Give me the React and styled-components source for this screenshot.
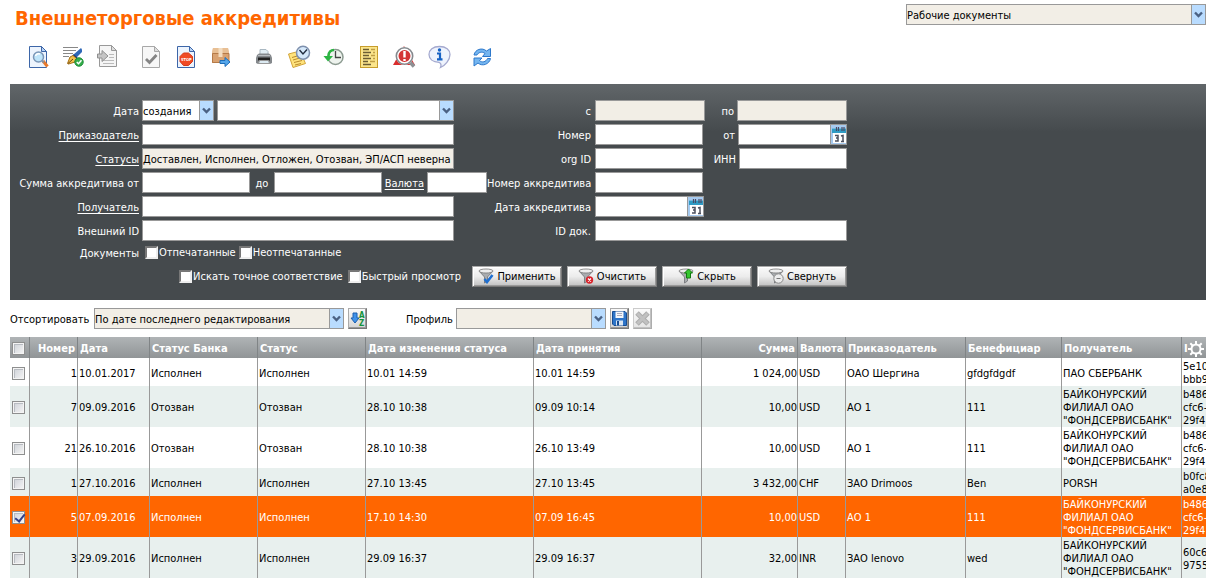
import React, { useState } from 'react';
import styled, { createGlobalStyle, css } from 'styled-components';

const GlobalStyle = createGlobalStyle`
  * { box-sizing: border-box; }

  body {
    margin: 0;
    background: #fff;
    color: #000;
    overflow: hidden;
  }

  body, input, select, button {
    font-family: 'DejaVu Sans Condensed', 'Noto Sans', sans-serif;
    font-size: 11px;
    line-height: 13px;
  }
`;

const Page = styled.div`
  padding-left: 10px;
`;

const Header = styled.header`
  display: flex;
  justify-content: space-between;
  align-items: flex-start;
  height: 40px;
  padding: 4px 0 0 5px;
`;

const Title = styled.h1`
  margin: 0;
  color: #f60;
  font-size: 20px;
  line-height: 28px;
  font-weight: bold;
`;

const Toolbar = styled.div`
  display: flex;
  gap: 8px;
  height: 44px;
  padding: 5px 0 0 10px;
`;

const ToolGroup = styled.div`
  display: flex;
`;

const ToolButton = styled.button`
  width: 35px;
  height: 24px;
  padding: 0;
  border: 0;
  background: none;
  cursor: pointer;

  svg { display: block; margin: 0 auto; }
`;

const FilterPanel = styled.form`
  display: flex;
  flex-direction: column;
  gap: 3px;
  height: 216px;
  padding-top: 16px;
  background: linear-gradient(#616669, #454a4d 48px);
  color: #fff;
`;

const FilterRow = styled.div`
  display: flex;
  align-items: center;
  width: 837px;
  height: 21px;
`;

const FieldLabel = styled.label`
  flex: ${props => props.$grow ? '1' : 'none'};
  width: ${props => props.$grow ? 'auto' : '132px'};
  padding-top: 2px;
  padding-right: ${props => props.$grow ? '4px' : '3px'};
  text-align: right;
  text-decoration: ${props => props.$link ? 'underline' : 'none'};
  text-underline-offset: 2px;
  white-space: nowrap;
`;

const FieldGroup = styled.div`
  display: flex;
  flex: none;
  align-items: center;
  gap: ${props => props.$gap || 0}px;
  width: ${props => props.$width}px;
`;

const InnerLabel = styled.label`
  flex: 1;
  padding: 2px 3px 0;
  text-align: ${props => props.$align || 'center'};
  text-decoration: ${props => props.$link ? 'underline' : 'none'};
  text-underline-offset: 2px;
`;

const field = css`
  height: 21px;
  border: 1px solid #999;
  border-radius: 0;
  background: ${props => props.$muted ? '#f2eee6' : '#fff'};
  color: #000;
  outline: none;
`;

const TextInput = styled.input`
  ${field}
  width: ${props => props.$width ? `${props.$width}px` : '100%'};
  padding: 2px 0 0;
`;

const SelectWrap = styled.span`
  position: relative;
  display: block;
  flex: none;
  width: ${props => props.$width}px;

  svg {
    position: absolute;
    top: 1px;
    right: 1px;
    pointer-events: none;
  }
`;

const NativeSelect = styled.select`
  ${field}
  display: block;
  appearance: none;
  width: 100%;
  padding: 2px 15px 0 0;
`;

const DateWrap = styled.span`
  display: flex;
  flex: none;
  width: 109px;
`;

const CalendarButton = styled.button`
  flex: none;
  width: 17px;
  height: 21px;
  margin-left: -1px;
  padding: 0;
  border: 1px solid #999;
  background: #a6caf0;

  svg { display: block; }
`;

const CheckLabel = styled.label`
  display: flex;
  align-items: center;
  gap: 1px;
  white-space: nowrap;
`;

const PanelCheck = styled.input`
  appearance: none;
  width: 13px;
  height: 13px;
  margin: 0;
  border: 2px solid;
  border-color: #777 #eee #eee #777;
  background: #fff;

  &:checked { background: #31527f; }
`;

const CheckRow = styled(FilterRow)`
  height: ${props => props.$height}px;
  justify-content: ${props => props.$end ? 'flex-end' : 'flex-start'};
  gap: ${props => props.$gap || 0}px;
`;

const Actions = styled.div`
  display: flex;
  gap: 5px;
  padding-left: 6px;
`;

const ActionButton = styled.button`
  display: flex;
  align-items: center;
  justify-content: center;
  gap: 3px;
  width: 90px;
  height: 21px;
  padding: 0;
  border: 1px solid;
  border-color: #aaa #777 #777 #aaa;
  box-shadow: inset 1px 1px #fff, inset -1px -1px #999;
  background: linear-gradient(#fafafa, #ececec 50%, #c0c0c0);
  color: #000;
  white-space: nowrap;
`;

const SortBar = styled.div`
  display: flex;
  align-items: center;
  height: 37px;
`;

const SortLabel = styled.label`
  width: ${props => props.$width}px;
  padding-top: 2px;
  padding-left: ${props => props.$indent || 0}px;
`;

const SmallButton = styled.button`
  width: 19px;
  height: 21px;
  margin-left: 4px;
  padding: 0;
  border: 1px solid;
  border-color: #aaa #777 #777 #aaa;
  box-shadow: inset -1px -1px #999;
  background: linear-gradient(#fafafa, #d4d4d4);

  &:disabled { opacity: 0.6; }
  svg { display: block; }
`;

const Table = styled.table`
  width: 100%;
  table-layout: fixed;
  border-collapse: separate;
  border-spacing: 0;
`;

const HeadCell = styled.th`
  height: 21px;
  padding: 2px 2px 0;
  overflow: hidden;
  border-right: 1px solid #808486;
  background: linear-gradient(#b0b4b6, #909496);
  color: #fff;
  font-weight: bold;
  text-align: ${props => props.$right ? 'right' : 'left'};
  white-space: nowrap;

  &:last-child { border-right: 0; }
`;

const Row = styled.tr`
  background: ${props => props.$selected ? '#f60' : props.$even ? '#e8f0ee' : '#fff'};
  color: ${props => props.$selected ? '#fff' : '#000'};
`;

const Cell = styled.td`
  padding: 2px 0 0 ${props => props.$right ? 0 : 1}px;
  overflow: hidden;
  border-right: 1px solid #999;
  text-align: ${props => props.$right ? 'right' : 'left'};
  white-space: ${props => props.$lines ? 'pre' : 'nowrap'};

  &:last-child { border-right: 0; }
`;

const RowCheck = styled.input`
  appearance: none;
  display: block;
  width: 13px;
  height: 13px;
  margin: 0 0 0 1px;
  border: 1px solid #8e8f8f;
  box-shadow: inset 0 0 0 1px #f4f4f4, inset 2px 2px #b8bcc2;
  background: linear-gradient(135deg, #cbcfd5, #f6f6f6);

  &:checked::after {
    content: '';
    display: block;
    width: 4px;
    height: 8px;
    margin: 0 0 0 4px;
    border: solid #31408c;
    border-width: 0 2px 2px 0;
    transform: rotate(38deg);
  }
`;

const HeadCheck = styled(RowCheck)`
  margin-left: 0;
`;

const GearHead = styled.span`
  display: flex;
  align-items: center;

  svg { flex: none; }
`;

const Arrow = () => (
  <svg width="14" height="19" viewBox="0 0 14 19">
    <rect width="14" height="19" fill="#b9dcff" />
    <path d="M0 0V19" stroke="#999" strokeWidth="2" />
    <path d="M4 7.500L7.500 11L11 7.500" fill="none" stroke="#4a6184" strokeWidth="2.400" />
  </svg>
);

const Select = ({ id, label, width, options, muted }) => (
  <SelectWrap $width={width}>
    <NativeSelect id={id} aria-label={label} $muted={muted}>
      {options.map(o => <option key={o}>{o}</option>)}
    </NativeSelect>
    <Arrow />
  </SelectWrap>
);

const Calendar = () => (
  <svg width="15" height="19" viewBox="0 0 15 19">
    <rect width="15" height="19" fill="#a6caf0" />
    <rect x="2" y="8" width="13" height="10" fill="#fff" />
    <rect x="1" y="3" width="14" height="5" fill="#2f9bc4" />
    <path d="M1 3.500H15" stroke="#77b9dc" />
    <path d="M5.500 2V6M7.500 2V6M11 2V6M13 2V6" stroke="#4a4a66" strokeWidth="1.200" />
    <path d="M4 10.500H7V16H4M5 13H7M10 11L12 10.500V16M10 16.500H13" fill="none" stroke="#4b4f5e" strokeWidth="1.500" />
  </svg>
);

const DateField = ({ id }) => (
  <DateWrap>
    <TextInput id={id} />
    <CalendarButton type="button" aria-label="Календарь"><Calendar /></CalendarButton>
  </DateWrap>
);

const Icon = ({ size = 24, children }) => (
  <svg width={size} height={size} viewBox={`0 0 ${size} ${size}`} fill="none">{children}</svg>
);

const Sheet = ({ stroke, fill, fold, y = 0 }) => (
  <>
    <path d={`M3.500 ${1.5 + y}H15.500L20.500 ${6.5 + y}V${22.5 + y}H3.500Z`} fill={fill} stroke={stroke} />
    <path d={`M15.500 ${1.5 + y}V${6.5 + y}H20.500Z`} fill={fold} stroke={stroke} />
  </>
);

const ViewIcon = () => (
  <Icon>
    <Sheet stroke="#3d66a8" fill="#edf4fd" fold="#b9d4f5" />
    <path d="M17 16L21.500 21.500" stroke="#e8792a" strokeWidth="3" />
    <path d="M16 15.500L18 17.500" stroke="#8a8f98" strokeWidth="2" />
    <circle cx="12.500" cy="12" r="5" fill="#bfe5fa" stroke="#7b97b8" strokeWidth="1.500" />
    <path d="M9.500 11C10 9 12 8.500 14 9" stroke="#fff" strokeWidth="1.500" />
  </Icon>
);

const SignIcon = () => (
  <Icon>
    <path d="M2 2.500H17M2 5.500H15M2 8.500H12M2 11.500H8" stroke="#888" />
    <path d="M12 10L20 3L21 4.500L21 7L16 12Z" fill="#2f68b8" />
    <path d="M12 10L16 13" stroke="#1b3f7c" strokeWidth="2" />
    <path d="M6.500 18.500L9 12L12 10.500L15.500 13.500L14 17L7.500 19Z" fill="#f2c14c" stroke="#a36d15" />
    <path d="M7 18.500L12 14" stroke="#694410" />
    <circle cx="18" cy="17" r="4.200" fill="#35ae4b" stroke="#168932" />
    <path d="M15.800 17L17.500 18.700L20.500 15.300" stroke="#fff" strokeWidth="1.500" />
  </Icon>
);

const ImportIcon = () => (
  <Icon>
    <Sheet stroke="#999" fill="#f5f5f5" fold="#ddd" y={-1} />
    <path d="M13 9.500H18M13 12.500H18M7 15.500H18M7 18.500H18" stroke="#bbb" />
    <path d="M1.500 9H6V5.500L12 11L6 16.500V13H1.500Z" fill="#c4c4c4" stroke="#909090" />
  </Icon>
);

const CheckIcon = () => (
  <Icon>
    <Sheet stroke="#a8a8a8" fill="#f7f7f7" fold="#ddd" />
    <path d="M7 14L10.500 17.500L17.500 10" stroke="#858585" strokeWidth="2.800" />
  </Icon>
);

const StopIcon = () => (
  <Icon>
    <Sheet stroke="#3d66a8" fill="#edf4fd" fold="#b9d4f5" />
    <path d="M9.500 8H14.500L18.500 11.500V16.500L14.500 20.500H9.500L6 16.500V11.500Z" fill="#f04a25" stroke="#d53a1b" />
    <text x="12.300" y="15.800" fill="#fff" fontSize="4" fontWeight="bold" textAnchor="middle">STOP</text>
  </Icon>
);

const BoxIcon = () => (
  <Icon>
    <path d="M4 3H19L20 9V18H3V9Z" fill="#d9a271" />
    <path d="M4 3H19L20 8.500H3Z" fill="#e8bf94" />
    <path d="M3.500 8.500V17.500H20V8.500Z" stroke="#b57a48" />
    <path d="M9.500 3H13.500V12H9.500Z" fill="#f3dcc0" />
    <path d="M11 15.500H16V12.500L21 17L16 21.500V18.500H11Z" fill="#55a6ea" stroke="#1e6db8" />
  </Icon>
);

const PrintIcon = () => (
  <Icon>
    <path d="M8 10V4.500H14L16 6.500V10Z" fill="#e2eef5" stroke="#a9b8c2" />
    <path d="M5 10L7 8.500H17L19 10L20 13V18L18 19H6L4 18V13Z" fill="#85898d" />
    <path d="M6 12.500H18V15.500H6Z" fill="#222" />
    <path d="M6 10.500H18" stroke="#b8bcc0" />
    <path d="M7.500 15.500H16.500L17.500 18.500H6.500Z" fill="#dceaf2" stroke="#999" />
  </Icon>
);

const NoteClockIcon = () => (
  <Icon>
    <path d="M1.500 9L13 6L18.500 18.500L6 22.500Z" fill="#ffe37c" stroke="#d2a53a" />
    <path d="M5 12.500L12 10.500M6 15L14.500 12.500M7 17.500L15 15.500M8 20L14 18.500" stroke="#b98a2c" />
    <circle cx="16" cy="7.800" r="6.500" fill="#d5e8fa" stroke="#7e90ad" strokeWidth="1.500" />
    <path d="M12.500 5L16 9L20 4.500" stroke="#222d40" strokeWidth="1.400" />
  </Icon>
);

const HistoryIcon = () => (
  <Icon>
    <circle cx="13.500" cy="12" r="7.500" fill="#eef3ee" stroke="#8b9a90" strokeWidth="1.500" />
    <path d="M13.500 6V12.500H19" stroke="#444" strokeWidth="1.300" />
    <path d="M12 5C9 5 6.500 7 6.500 11" stroke="#2cb543" strokeWidth="2.500" />
    <path d="M1.500 11H11L6 16.500Z" fill="#2cb543" />
  </Icon>
);

const ReportIcon = () => (
  <Icon>
    <rect x="3.500" y="1.500" width="17" height="21" fill="#fbe58b" stroke="#c79d2c" />
    <path d="M6 4.500H12M6 7.500H14M6 10.500H12M6 13.500H14M6 16.500H11M6 19.500H14" stroke="#6b5d34" strokeWidth="1.400" />
    <path d="M14 4.500H18M16 7.500H18M14 10.500H18M16 13.500H18M13 16.500H18" stroke="#bf9e45" strokeWidth="1.400" />
  </Icon>
);

const AlertSearchIcon = () => (
  <Icon>
    <path d="M12 1L23 20H1Z" fill="#d92d2d" />
    <path d="M17 16L22 21.500" stroke="#8d9094" strokeWidth="3.500" />
    <circle cx="12.500" cy="11" r="7.500" fill="#d43535" stroke="#fff" strokeWidth="3" />
    <circle cx="12.500" cy="11" r="8.200" stroke="#85898e" strokeWidth="1.600" />
    <path d="M12.500 6V12.500M12.500 14V16" stroke="#fff" strokeWidth="2.400" />
  </Icon>
);

const InfoIcon = () => (
  <Icon>
    <path d="M12.500 1.500C6 1.500 2 5 2 9.500C2 14 6 17 12 17.300C14 18 14.500 20 13.500 22.500C18 20.500 23 15 23 9.500C23 5 19 1.500 12.500 1.500Z" fill="#eef3fd" stroke="#a4a9cf" strokeWidth="1.300" />
    <circle cx="12.500" cy="5" r="1.700" fill="#1762c4" />
    <path d="M10 8.500H13V14M10 14.300H15.500" stroke="#1762c4" strokeWidth="2.200" />
  </Icon>
);

const RefreshIcon = () => (
  <Icon>
    <path d="M4 10C5 4.500 12 2 16.500 6L20.500 3.500V11.500H12.500L15 8.500C12 6 8 7.500 7 10Z" fill="#75b6f0" stroke="#2d78cb" />
    <path d="M20.500 13.500C19.500 19 12.500 22 8 18L4 21V13H12L9.500 15.500C12 18 16 17 17.500 13.500Z" fill="#75b6f0" stroke="#2d78cb" />
  </Icon>
);

const Funnel = ({ children }) => (
  <Icon size={16}>
    <path d="M1 3L6.500 9V15L9.500 13V9L15 3Z" fill="#a9acaf" stroke="#6d7073" strokeWidth="0.800" />
    <ellipse cx="8" cy="3" rx="7" ry="2" fill="#eee" stroke="#777" strokeWidth="0.800" />
    {children}
  </Icon>
);

const ApplyIcon = () => (
  <Funnel><path d="M6.500 11L9 14L14.500 7" stroke="#1f6fd0" strokeWidth="2.600" /></Funnel>
);

const ClearIcon = () => (
  <Funnel>
    <circle cx="11.500" cy="12" r="3.700" fill="#d8232b" />
    <path d="M10 10.500L13 13.500M13 10.500L10 13.500" stroke="#fff" strokeWidth="1.200" />
  </Funnel>
);

const HideIcon = () => (
  <Funnel><path d="M10.500 1L14.500 5H12.500V10H8.500V5H6.500Z" fill="#35c72f" stroke="#12790f" /></Funnel>
);

const CollapseIcon = () => (
  <Funnel>
    <circle cx="10.500" cy="10.500" r="4.700" fill="#ececec" stroke="#888" />
    <path d="M8.500 10.500H12.500" stroke="#777" />
  </Funnel>
);

const SortIcon = () => (
  <svg width="17" height="19" viewBox="0 0 17 19">
    <path d="M4 4H8V9H10L6 14L2 9H4Z" fill="#3f92ea" stroke="#1c5eae" />
    <text x="10" y="9" fontSize="8" fontWeight="bold" fill="#14923a">A</text>
    <text x="10" y="17" fontSize="8" fontWeight="bold" fill="#14923a">Z</text>
  </svg>
);

const SaveIcon = () => (
  <svg width="17" height="19" viewBox="0 0 17 19">
    <path d="M1.500 2.500H14L15.500 4V16.500H3L1.500 15Z" fill="#2d74c8" stroke="#174d93" />
    <path d="M4.500 2.500H12.500V9H4.500Z" fill="#f3f7fb" />
    <path d="M6 4.500H11M6 6.500H11" stroke="#aab" />
    <path d="M5 11.500H12V16.500H5Z" fill="#d9e5f2" />
    <path d="M6 12H8V16.500H6Z" fill="#174d93" />
  </svg>
);

const DeleteIcon = () => (
  <svg width="17" height="19" viewBox="0 0 17 19">
    <path d="M3 4L14 15M14 4L3 15" stroke="#777" strokeWidth="5" />
    <path d="M3.500 4.500L13.500 14.500M13.500 4.500L3.500 14.500" stroke="#999" strokeWidth="3" />
  </svg>
);

const GearIcon = () => (
  <Icon size={16}>
    <path d="M8 0V4M8 12V16M0 8H4M12 8H16M2.300 2.300L5 5M11 11L13.700 13.700M2.300 13.700L5 11M11 5L13.700 2.300" stroke="#fff" strokeWidth="2" />
    <circle cx="8" cy="8" r="4.500" stroke="#fff" strokeWidth="2" />
  </Icon>
);

const tools = [
  [['Просмотр', ViewIcon], ['Подписать', SignIcon], ['Импорт', ImportIcon]],
  [['Проверить', CheckIcon], ['Остановить', StopIcon], ['Отправить', BoxIcon]],
  [['Печать', PrintIcon], ['Отложить', NoteClockIcon], ['История', HistoryIcon], ['Отчёт', ReportIcon], ['Ошибки', AlertSearchIcon], ['Информация', InfoIcon]],
  [['Обновить', RefreshIcon]],
];

const actions = [
  ['Применить', ApplyIcon],
  ['Очистить', ClearIcon],
  ['Скрыть', HideIcon],
  ['Свернуть', CollapseIcon],
];

const columns = [
  { title: 'Номер', width: 48, right: true },
  { title: 'Дата', width: 72 },
  { title: 'Статус Банка', width: 108 },
  { title: 'Статус', width: 108 },
  { title: 'Дата изменения статуса', width: 168 },
  { title: 'Дата принятия', width: 168 },
  { title: 'Сумма', width: 96, right: true },
  { title: 'Валюта', width: 48 },
  { title: 'Приказодатель', width: 120 },
  { title: 'Бенефициар', width: 96 },
  { title: 'Получатель', width: 120 },
];

const BRANCH = 'БАЙКОНУРСКИЙ\nФИЛИАЛ ОАО\n"ФОНДСЕРВИСБАНК"';

const documents = [
  ['1', '10.01.2017', 'Исполнен', 'Исполнен', '10.01 14:59', '10.01 14:59', '1 024,00', 'USD', 'ОАО Шергина', 'gfdgfdgdf', 'ПАО СБЕРБАНК', '5e10\nbbb9'],
  ['7', '09.09.2016', 'Отозван', 'Отозван', '28.10 10:38', '09.09 10:14', '10,00', 'USD', 'АО 1', '111', BRANCH, 'b486\ncfc6-\n29f4'],
  ['21', '26.10.2016', 'Отозван', 'Отозван', '28.10 10:38', '26.10 13:49', '10,00', 'USD', 'АО 1', '111', BRANCH, 'b486\ncfc6-\n29f4'],
  ['1', '27.10.2016', 'Исполнен', 'Исполнен', '27.10 13:45', '27.10 13:45', '3 432,00', 'CHF', 'ЗАО Drimoos', 'Ben', 'PORSH', 'b0fc8\na0e8'],
  ['5', '07.09.2016', 'Исполнен', 'Исполнен', '17.10 14:30', '07.09 16:45', '10,00', 'USD', 'АО 1', '111', BRANCH, 'b486\ncfc6-\n29f4'],
  ['3', '29.09.2016', 'Исполнен', 'Исполнен', '29.09 16:37', '29.09 16:37', '32,00', 'INR', 'ЗАО lenovo', 'wed', BRANCH, '60c6\n9755'],
];

const App = () => {
  const [selected, setSelected] = useState([4]);

  const toggle = (index) => {
    setSelected(selected.includes(index) ? selected.filter(i => i !== index) : [...selected, index]);
  };

  return (
    <Page>
      <GlobalStyle />
      <Header>
        <Title>Внешнеторговые аккредитивы</Title>
        <Select label="Раздел" width={300} options={['Рабочие документы']} muted />
      </Header>

      <Toolbar>
        {tools.map((group, i) => (
          <ToolGroup key={i}>
            {group.map(([name, ToolIcon]) => (
              <ToolButton key={name} type="button" aria-label={name}><ToolIcon /></ToolButton>
            ))}
          </ToolGroup>
        ))}
      </Toolbar>

      <FilterPanel onSubmit={e => e.preventDefault()}>
        <FilterRow>
          <FieldLabel htmlFor="dateType">Дата</FieldLabel>
          <FieldGroup $width={312} $gap={3}>
            <Select id="dateType" width={72} options={['создания']} />
            <Select label="Период" width={237} options={['']} />
          </FieldGroup>
          <FieldLabel $grow htmlFor="dateFrom">с</FieldLabel>
          <FieldGroup $width={252}>
            <TextInput id="dateFrom" $width={110} $muted readOnly />
            <InnerLabel htmlFor="dateTo" $align="right">по</InnerLabel>
            <TextInput id="dateTo" $width={110} $muted readOnly />
          </FieldGroup>
        </FilterRow>

        <FilterRow>
          <FieldLabel $link htmlFor="applicant">Приказодатель</FieldLabel>
          <FieldGroup $width={312}><TextInput id="applicant" /></FieldGroup>
          <FieldLabel $grow htmlFor="number">Номер</FieldLabel>
          <FieldGroup $width={252}>
            <TextInput id="number" $width={108} />
            <InnerLabel htmlFor="numberDate" $align="right">от</InnerLabel>
            <DateField id="numberDate" />
          </FieldGroup>
        </FilterRow>

        <FilterRow>
          <FieldLabel $link htmlFor="statuses">Статусы</FieldLabel>
          <FieldGroup $width={312}>
            <TextInput id="statuses" $muted readOnly value="Доставлен, Исполнен, Отложен, Отозван, ЭП/АСП неверна" />
          </FieldGroup>
          <FieldLabel $grow htmlFor="orgId">org ID</FieldLabel>
          <FieldGroup $width={252}>
            <TextInput id="orgId" $width={108} />
            <InnerLabel htmlFor="inn" $align="right">ИНН</InnerLabel>
            <TextInput id="inn" $width={108} />
          </FieldGroup>
        </FilterRow>

        <FilterRow>
          <FieldLabel htmlFor="sumFrom">Сумма аккредитива от</FieldLabel>
          <FieldGroup $width={345}>
            <TextInput id="sumFrom" $width={108} />
            <InnerLabel htmlFor="sumTo">до</InnerLabel>
            <TextInput id="sumTo" $width={108} />
            <InnerLabel $link htmlFor="currency">Валюта</InnerLabel>
            <TextInput id="currency" $width={60} />
          </FieldGroup>
          <FieldLabel $grow htmlFor="creditNumber">Номер аккредитива</FieldLabel>
          <FieldGroup $width={252}><TextInput id="creditNumber" $width={108} /></FieldGroup>
        </FilterRow>

        <FilterRow>
          <FieldLabel $link htmlFor="beneficiary">Получатель</FieldLabel>
          <FieldGroup $width={312}><TextInput id="beneficiary" /></FieldGroup>
          <FieldLabel $grow htmlFor="creditDate">Дата аккредитива</FieldLabel>
          <FieldGroup $width={252}><DateField id="creditDate" /></FieldGroup>
        </FilterRow>

        <FilterRow>
          <FieldLabel htmlFor="externalId">Внешний ID</FieldLabel>
          <FieldGroup $width={312}><TextInput id="externalId" /></FieldGroup>
          <FieldLabel $grow htmlFor="docId">ID док.</FieldLabel>
          <FieldGroup $width={252}><TextInput id="docId" /></FieldGroup>
        </FilterRow>

        <CheckRow $height={16} $gap={3}>
          <FieldLabel as="span">Документы</FieldLabel>
          <CheckLabel><PanelCheck type="checkbox" />Отпечатанные</CheckLabel>
          <CheckLabel><PanelCheck type="checkbox" />Неотпечатанные</CheckLabel>
        </CheckRow>

        <CheckRow $height={26} $gap={5} $end>
          <CheckLabel><PanelCheck type="checkbox" />Искать точное соответствие</CheckLabel>
          <CheckLabel><PanelCheck type="checkbox" />Быстрый просмотр</CheckLabel>
          <Actions>
            {actions.map(([name, ActionIcon]) => (
              <ActionButton key={name} type="button"><ActionIcon />{name}</ActionButton>
            ))}
          </Actions>
        </CheckRow>
      </FilterPanel>

      <SortBar>
        <SortLabel $width={84} htmlFor="sort">Отсортировать</SortLabel>
        <Select id="sort" width={250} options={['По дате последнего редактирования']} muted />
        <SmallButton type="button" aria-label="Направление сортировки"><SortIcon /></SmallButton>
        <SortLabel $width={89} $indent={39} htmlFor="profile">Профиль</SortLabel>
        <Select id="profile" width={150} options={['']} muted />
        <SmallButton type="button" aria-label="Сохранить профиль"><SaveIcon /></SmallButton>
        <SmallButton type="button" aria-label="Удалить профиль" disabled><DeleteIcon /></SmallButton>
      </SortBar>

      <Table>
        <colgroup>
          <col width="20" />
          {columns.map(c => <col key={c.title} width={c.width} />)}
          <col />
        </colgroup>
        <thead>
          <tr>
            <HeadCell><HeadCheck type="checkbox" aria-label="Выбрать все" /></HeadCell>
            {columns.map(c => <HeadCell key={c.title} $right={c.right}>{c.title}</HeadCell>)}
            <HeadCell><GearHead>I<GearIcon /></GearHead></HeadCell>
          </tr>
        </thead>
        <tbody>
          {documents.map((doc, index) => (
            <Row key={index} $even={index % 2 === 1} $selected={selected.includes(index)}>
              <Cell>
                <RowCheck
                  type="checkbox"
                  aria-label={`Документ ${doc[0]}`}
                  checked={selected.includes(index)}
                  onChange={() => toggle(index)}
                />
              </Cell>
              {doc.map((value, i) => (
                <Cell key={i} $right={columns[i]?.right} $lines={i > 9}>{value}</Cell>
              ))}
            </Row>
          ))}
        </tbody>
      </Table>
    </Page>
  );
};

export default App;
